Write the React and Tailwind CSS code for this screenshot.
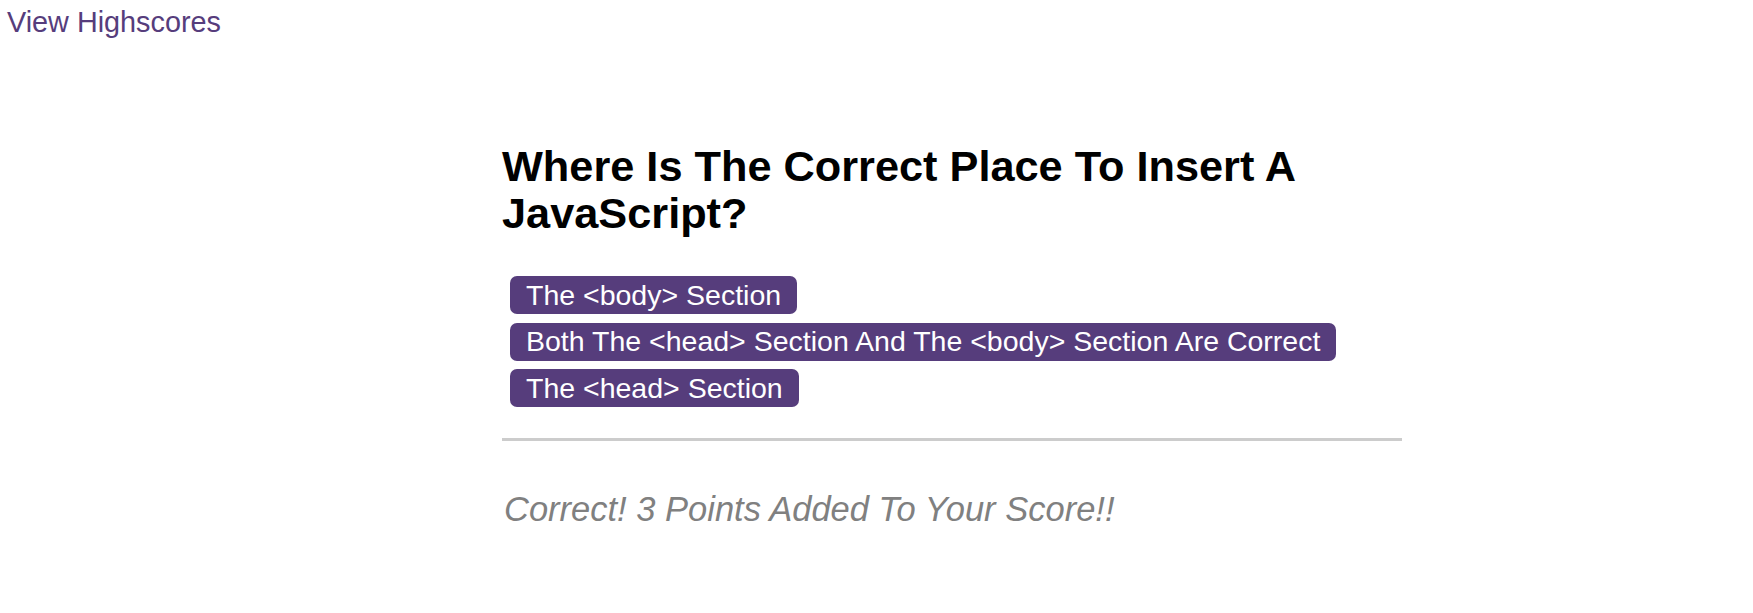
import React from 'react';

const answers = [
    'The <body> Section',
    'Both The <head> Section And The <body> Section Are Correct',
    'The <head> Section',
];

const App = () => {
    return (
        <div className="min-h-[613px] bg-white font-['Liberation_Sans',Arial,sans-serif]">
            <header className="pt-[6px] pl-[7px]">
                <a href="#" className="text-[28.8px] leading-[33px] text-[#563d7c]">
                    View Highscores
                </a>
            </header>

            <main className="ml-[502px] w-[900px] pt-[104px]">
                <h1 className="text-[43.3px] leading-[47px] font-bold text-black">
                    Where Is The Correct Place To Insert A JavaScript?
                </h1>

                <div className="mt-[39px] ml-[8px] flex flex-col items-start gap-[8.5px]">
                    {answers.map((answer) => (
                        <button
                            key={answer}
                            className="h-[38px] px-[16px] rounded-[7px] bg-[#563d7c] text-white text-[28.5px] leading-[33px]"
                        >
                            {answer}
                        </button>
                    ))}
                </div>

                <hr className="mt-[31px] border-0 h-[3px] bg-[#cccccc]" />

                <p className="mt-[49px] ml-[2px] text-[34.5px] leading-[39px] italic text-[#808080]">
                    Correct! 3 Points Added To Your Score!!
                </p>
            </main>
        </div>
    );
};

export default App;
